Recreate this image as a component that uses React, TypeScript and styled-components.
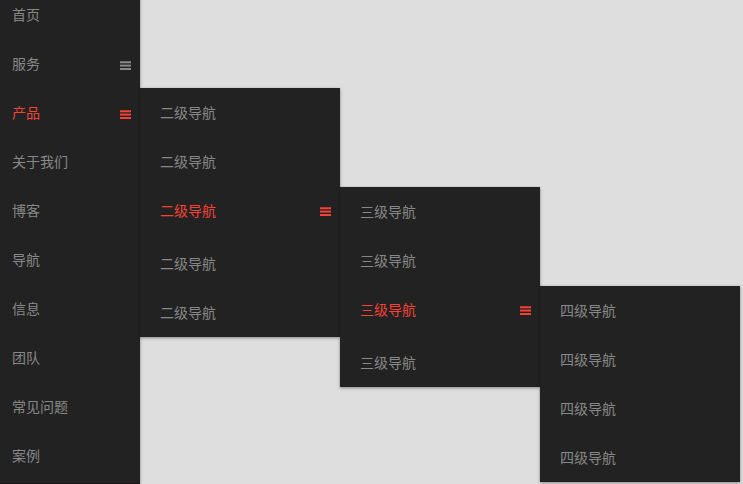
import React from "react";
import styled, { createGlobalStyle, css } from "styled-components";

const GlobalStyle = createGlobalStyle`
  *, *::before, *::after {
    box-sizing: border-box;
  }
  body {
    margin: 0;
    background: #dedede;
    font-family: "Noto Sans CJK SC", sans-serif;
    font-size: 14px;
  }
`;

const panel = css`
  margin: 0;
  padding: 0;
  list-style: none;
  background: #222;
  box-shadow: 0 1px 3px rgba(0, 0, 0, 0.4);
`;

const Page = styled.div`
  display: flex;
  height: 100vh;
  overflow: hidden;
`;

const Sidebar = styled.nav`
  display: flex;
  flex: none;
`;

const MainMenu = styled.ul`
  ${panel}
  width: 140px;
  margin-top: -10px;
  border-bottom: 1px solid #1a1214;
`;

const SubMenu = styled.ul<{ $offset: number }>`
  ${panel}
  position: absolute;
  top: ${(p) => p.$offset}px;
  left: 100%;
  width: 200px;
`;

const Item = styled.li<{ $tall: boolean }>`
  position: relative;
  padding-bottom: ${(p) => (p.$tall ? 4 : 0)}px;
`;

const ItemLink = styled.a<{ $active: boolean; $nested: boolean }>`
  display: flex;
  align-items: center;
  justify-content: space-between;
  height: 49px;
  padding: 0 9px 2px ${(p) => (p.$nested ? 20 : 12)}px;
  color: ${(p) => (p.$active ? "#f44336" : "#888")};
  line-height: 20px;
  text-decoration: none;
`;

const Bars = styled.svg<{ $nested: boolean }>`
  flex: none;
  width: 11px;
  height: 9px;
  margin-top: ${(p) => (p.$nested ? 4 : 6)}px;
  fill: currentColor;
`;

type Entry = { label: string; active?: boolean; expandable?: boolean; children?: Entry[] };

const level4: Entry[] = Array.from({ length: 4 }, () => ({ label: "四级导航" }));

const level3: Entry[] = [
  { label: "三级导航" },
  { label: "三级导航" },
  { label: "三级导航", active: true, children: level4 },
  { label: "三级导航" },
];

const level2: Entry[] = [
  { label: "二级导航" },
  { label: "二级导航" },
  { label: "二级导航", active: true, children: level3 },
  { label: "二级导航" },
  { label: "二级导航" },
];

const entries: Entry[] = [
  { label: "首页" },
  { label: "服务", expandable: true },
  { label: "产品", active: true, children: level2 },
  { label: "关于我们" },
  { label: "博客" },
  { label: "导航" },
  { label: "信息" },
  { label: "团队" },
  { label: "常见问题" },
  { label: "案例" },
];

function BarsIcon({ nested }: { nested: boolean }) {
  return (
    <Bars $nested={nested} viewBox="0 0 11 9" shapeRendering="crispEdges" aria-hidden="true">
      <path d="M0 0h11v1H0z" opacity="0.75" />
      <path d="M0 1h11v1H0z" />
      <path d="M0 2h11v1H0z" opacity="0.3" />
      <path d="M0 3h11v1H0z" opacity="0.4" />
      <path d="M0 4h11v1H0z" />
      <path d="M0 5h11v1H0z" opacity="0.6" />
      <path d="M0 7h11v2H0z" />
    </Bars>
  );
}

function MenuItems({ items, depth }: { items: Entry[]; depth: number }) {
  const nested = depth > 0;
  return (
    <>
      {items.map((item, index) => (
        <Item key={index} $tall={nested && Boolean(item.children)}>
          <ItemLink href="#" $active={Boolean(item.active)} $nested={nested}>
            {item.label}
            {(item.expandable || item.children) && <BarsIcon nested={nested} />}
          </ItemLink>
          {item.children && (
            <SubMenu $offset={nested ? 1 : 0}>
              <MenuItems items={item.children} depth={depth + 1} />
            </SubMenu>
          )}
        </Item>
      ))}
    </>
  );
}

export default function App() {
  return (
    <>
      <GlobalStyle />
      <Page>
        <Sidebar>
          <MainMenu>
            <MenuItems items={entries} depth={0} />
          </MainMenu>
        </Sidebar>
      </Page>
    </>
  );
}
